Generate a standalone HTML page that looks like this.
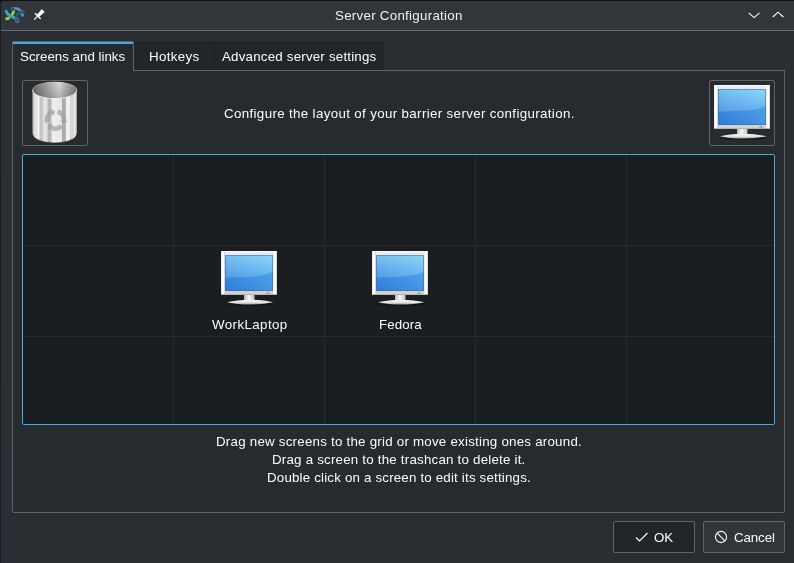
<!DOCTYPE html>
<html><head><meta charset="utf-8">
<style>
*{box-sizing:border-box;margin:0;padding:0}
html,body{-webkit-font-smoothing:antialiased;width:794px;height:563px;overflow:hidden;background:#2a2e32;font-family:"Liberation Sans",sans-serif;font-size:13.333px;color:#fcfcfc}
.a{position:absolute}
.t{position:absolute;white-space:pre;line-height:16px;will-change:transform}
#edgeL{left:0;top:0;width:1px;height:563px;background:linear-gradient(#1e1e1e,#17171f 40%,#1a1a2a)}
#edgeT{left:0;top:0;width:794px;height:1px;background:#121211}
#title{left:1px;top:1px;width:793px;height:29px;background:#31363b}
#sep{left:1px;top:30px;width:793px;height:1px;background:#6a6d70}
#panel{left:12px;top:70px;width:773px;height:443px;border:1px solid #5f6366;border-top:none;border-radius:0 0 2px 2px;background:#272a2e}
#panelTopR{left:133px;top:70px;width:652px;height:1px;background:#5f6366}
.tab{position:absolute;top:41px;height:30px}
#tab1{left:12px;width:122px;border:1px solid #5f6366;border-bottom:none;border-radius:2px 2px 0 0;background:#272a2e}
#tab1blue{left:13px;top:42px;width:120px;height:2px;background:#3daee9}
#tab2{left:134px;top:41px;width:80px;height:29px;background:#232629}
#tab3{left:215px;top:41px;width:169px;height:29px;background:#232629}
.frame{position:absolute;border:1px solid #5f6366;border-radius:2px}
#grid{left:22px;top:154px;width:753px;height:271px;border:1px solid #3daee9;border-radius:2px;background:#1b1e20;overflow:hidden}
.gv{position:absolute;top:0;width:1px;height:269px;background:#272a2d}
.gh{position:absolute;left:0;height:1px;width:751px;background:#272a2d}
.btn{position:absolute;top:521px;width:82px;height:32px;border:1px solid #606467;border-radius:2px}
</style></head><body>
<svg width="0" height="0" style="position:absolute">
<defs>
<linearGradient id="bz" x1="0" y1="0" x2="0" y2="1"><stop offset="0" stop-color="#ececec"/><stop offset="0.5" stop-color="#dedede"/><stop offset="1" stop-color="#d0d0d0"/></linearGradient>
<linearGradient id="bzs" x1="0" y1="0" x2="1" y2="0"><stop offset="0" stop-color="#d8d8d8"/><stop offset="0.25" stop-color="#ffffff"/><stop offset="0.6" stop-color="#ffffff"/><stop offset="1" stop-color="#c8c8c8"/></linearGradient>
<linearGradient id="scrTop" x1="0.2" y1="1" x2="0.8" y2="0"><stop offset="0" stop-color="#589fe6"/><stop offset="1" stop-color="#88d3f8"/></linearGradient>
<linearGradient id="scrBot" x1="0" y1="1" x2="1" y2="0"><stop offset="0" stop-color="#2f7bdc"/><stop offset="1" stop-color="#5aafec"/></linearGradient>
<linearGradient id="neck" x1="0" y1="0" x2="1" y2="0"><stop offset="0" stop-color="#b9b9b9"/><stop offset="0.45" stop-color="#f6f6f6"/><stop offset="1" stop-color="#bdbdbd"/></linearGradient>
<linearGradient id="base" x1="0" y1="0" x2="0" y2="1"><stop offset="0" stop-color="#fafafa"/><stop offset="0.6" stop-color="#e2e2e2"/><stop offset="1" stop-color="#9a9a9a"/></linearGradient>
<symbol id="mon" viewBox="0 0 64 64">
 <ellipse cx="33" cy="57" rx="24" ry="2" fill="#000" opacity="0.35"/>
 <rect x="27" y="47" width="10.5" height="7.5" fill="url(#neck)"/>
 <path d="M10 55.2 Q20 52.7 33 52.7 Q46 52.7 56.3 55.2 Q46 57.5 33 57.5 Q20 57.5 10 55.2Z" fill="url(#base)"/>
 <rect x="4" y="4" width="56" height="44" fill="url(#bz)"/>
 <rect x="4" y="4" width="4" height="44" fill="url(#bzs)"/>
 <rect x="56" y="4" width="4" height="44" fill="url(#bzs)"/>
 <rect x="4" y="4" width="56" height="1" fill="#f8f8f8"/>
 <rect x="4" y="47" width="56" height="1" fill="#b4b4b4"/>
 <rect x="8" y="8" width="48" height="36" fill="url(#scrBot)"/>
 <path d="M8 8 H56 V24.3 Q50 28.5 32 29.8 Q20 30.5 8 30.4 Z" fill="url(#scrTop)"/>
 <rect x="8.5" y="8.5" width="47" height="35" fill="none" stroke="#3d6d96" stroke-opacity="0.55" stroke-width="1"/>
 <path d="M49.5 46.5 Q51 44.8 52.5 46.5" fill="none" stroke="#7a7a7a" stroke-width="1"/>
</symbol>
<linearGradient id="tb" x1="9.4" y1="0" x2="54" y2="0" gradientUnits="userSpaceOnUse">
 <stop offset="0" stop-color="#a8a8a8"/>
 <stop offset="0.045" stop-color="#dcdcdc"/>
 <stop offset="0.115" stop-color="#e8e8e8"/>
 <stop offset="0.14" stop-color="#fbfbfb"/>
 <stop offset="0.17" stop-color="#c6c6c6"/>
 <stop offset="0.235" stop-color="#c4c4c4"/>
 <stop offset="0.25" stop-color="#e2e2e2"/>
 <stop offset="0.33" stop-color="#e0e0e0"/>
 <stop offset="0.35" stop-color="#b6b6b6"/>
 <stop offset="0.42" stop-color="#b8b8b8"/>
 <stop offset="0.44" stop-color="#eeeeee"/>
 <stop offset="0.66" stop-color="#e8e8e8"/>
 <stop offset="0.675" stop-color="#ababab"/>
 <stop offset="0.74" stop-color="#adadad"/>
 <stop offset="0.755" stop-color="#f3f3f3"/>
 <stop offset="0.84" stop-color="#eeeeee"/>
 <stop offset="0.845" stop-color="#d6d6d6"/>
 <stop offset="0.92" stop-color="#d6d6d6"/>
 <stop offset="0.935" stop-color="#f3f3f3"/>
 <stop offset="0.975" stop-color="#d0d0d0"/>
 <stop offset="1" stop-color="#8c8c8c"/>
</linearGradient>
<linearGradient id="rim" x1="9.4" y1="0" x2="54" y2="0" gradientUnits="userSpaceOnUse">
 <stop offset="0" stop-color="#6a6a6a"/>
 <stop offset="0.6" stop-color="#d9d9d9"/>
 <stop offset="1" stop-color="#7c7c7c"/>
</linearGradient>
<linearGradient id="rimv" x1="0" y1="0" x2="0" y2="1">
 <stop offset="0" stop-color="#000" stop-opacity="0"/>
 <stop offset="1" stop-color="#000" stop-opacity="0.18"/>
</linearGradient>
</defs></svg>
<div class="a" id="title"></div>
<div class="a" id="sep"></div>
<div class="a" id="edgeL"></div>
<div class="a" id="edgeT"></div>
<div class="a" style="left:1px;top:1px;width:3px;height:3px;background:radial-gradient(circle at 100% 100%, transparent 2.2px, #1e1f21 3px)"></div>

<!-- title bar icons -->
<svg class="a" style="left:2px;top:4px" width="24" height="22" viewBox="0 0 24 22">
 <path d="M11.6 7.6 Q11.2 10 9.4 11.6" fill="none" stroke="#a3cd33" stroke-width="2.9" stroke-linecap="round"/>
 <path d="M4.2 7.2 Q5.6 11.6 12.3 13.6" fill="none" stroke="#3ea3cc" stroke-width="2.9" stroke-linecap="round"/>
 <circle cx="4.9" cy="4.8" r="1.7" fill="#0e5248"/>
 <ellipse cx="5.6" cy="14.6" rx="2.5" ry="1.6" transform="rotate(-15 5.6 14.6)" fill="#a3cd33"/>
 <circle cx="11.1" cy="5.1" r="1.6" fill="none" stroke="#2a8ea0" stroke-width="0.9"/>
 <path d="M13.2 4.3 Q16.5 4.6 18.6 6.7" fill="none" stroke="#6a85d6" stroke-width="2.5" stroke-linecap="round"/>
 <path d="M14.2 13.2 Q15 8.5 21.8 7.4" fill="none" stroke="#13695a" stroke-width="2.9" stroke-linecap="round"/>
 <circle cx="20.3" cy="11" r="1.7" fill="#6a85d6"/>
 <circle cx="15.2" cy="16.4" r="2.2" fill="none" stroke="#5f7fd0" stroke-width="0.9"/>
 <circle cx="15.2" cy="16.6" r="0.8" fill="none" stroke="#5f7fd0" stroke-width="0.6"/>
</svg>
<svg class="a" style="left:28px;top:4px" width="24" height="22" viewBox="0 0 24 22">
 <path d="M13.9 5.1 L16.7 7.9 L10.9 13.1 L8.7 10.9 Z" fill="#fcfcfc"/>
 <path d="M7.3 9.5 L12.3 14.5" stroke="#fcfcfc" stroke-width="1.3" stroke-linecap="round"/>
 <path d="M9.8 12 L6.4 15.4" stroke="#fcfcfc" stroke-width="1.1" stroke-linecap="round"/>
</svg>
<div class="t" style="left:335px;top:8px;color:#efefef;letter-spacing:0.27px">Server Configuration</div>
<svg class="a" style="left:746px;top:10px" width="16" height="10" viewBox="0 0 16 10"><path d="M2.7 2.8 L8.1 7.6 L13.5 2.8" fill="none" stroke="#fcfcfc" stroke-width="1.1"/></svg>
<svg class="a" style="left:770px;top:10px" width="16" height="10" viewBox="0 0 16 10"><path d="M2.8 7 L8 2.2 L13.4 7" fill="none" stroke="#fcfcfc" stroke-width="1.1"/></svg>

<!-- tabs -->
<div class="a" id="panel"></div>
<div class="a" id="panelTopR"></div>
<div class="tab" id="tab1"></div>
<div class="a" id="tab1blue"></div>
<div class="a" id="tab2"></div>
<div class="a" id="tab3"></div>
<div class="a" style="left:214px;top:41px;width:1px;height:29px;background:#1e2124"></div>
<div class="t" style="left:20px;top:49px">Screens and links</div>
<div class="t" style="left:149px;top:49px;letter-spacing:0.35px">Hotkeys</div>
<div class="t" style="left:222px;top:49px;letter-spacing:0.2px">Advanced server settings</div>

<!-- top row -->
<div class="frame" style="left:22px;top:80px;width:66px;height:66px"></div>
<div class="t" style="left:224px;top:106px;letter-spacing:0.35px">Configure the layout of your barrier server configuration.</div>
<div class="frame" style="left:709px;top:80px;width:66px;height:66px"></div>
<svg class="a" style="left:710px;top:81px" width="64" height="64"><use href="#mon"/></svg>
<svg class="a" style="left:23px;top:81px" width="64" height="64" viewBox="0 0 64 64">
 <path d="M9.4 9 V52.5 A22.3 9.5 0 0 0 54 52.5 V9 Z" fill="url(#tb)"/>
 <path d="M9.4 52.5 A22.3 9.5 0 0 0 54 52.5" fill="none" stroke="#2a2a2a" stroke-opacity="0.7" stroke-width="1"/>
 <ellipse cx="31.7" cy="9.3" rx="22.3" ry="8.5" fill="#eeeeee"/>
 <ellipse cx="31.7" cy="9.0" rx="21.7" ry="8.0" fill="url(#rim)"/>
 <ellipse cx="31.7" cy="9.0" rx="21.7" ry="8.0" fill="url(#rimv)"/>
 <g fill="#9ea2a4" opacity="0.72" transform="translate(32.5 39)">
  <path d="M2.66 -10.67 A11 11 0 0 1 10.94 1.15 L12.73 1.34 L7.59 4.04 L4.38 0.46 L6.17 0.65 A6.2 6.2 0 0 0 1.50 -6.02 Z"/>
  <path d="M7.91 7.64 A11 11 0 0 1 -6.47 8.90 L-7.52 10.36 L-7.29 4.56 L-2.59 3.56 L-3.64 5.02 A6.2 6.2 0 0 0 4.46 4.31 Z"/>
  <path d="M-10.57 3.03 A11 11 0 0 1 -4.47 -10.05 L-5.21 -11.69 L-0.30 -8.59 L-1.79 -4.02 L-2.52 -5.66 A6.2 6.2 0 0 0 -5.96 1.71 Z"/>
 </g>
</svg>

<!-- grid -->
<div class="a" id="grid">
  <div class="gv" style="left:150px"></div>
  <div class="gv" style="left:301px"></div>
  <div class="gv" style="left:452px"></div>
  <div class="gv" style="left:603px"></div>
  <div class="gh" style="top:90px"></div>
  <div class="gh" style="top:181px"></div>
</div>
<svg class="a" style="left:217px;top:247px" width="64" height="64"><use href="#mon"/></svg>
<svg class="a" style="left:368px;top:247px" width="64" height="64"><use href="#mon"/></svg>
<div class="t" style="left:211.5px;top:317px;letter-spacing:0.4px">WorkLaptop</div>
<div class="t" style="left:378.6px;top:317px;letter-spacing:0.1px">Fedora</div>

<!-- help text -->
<div class="t" style="left:216px;top:434px;letter-spacing:0.23px">Drag new screens to the grid or move existing ones around.</div>
<div class="t" style="left:272px;top:452px;letter-spacing:0.21px">Drag a screen to the trashcan to delete it.</div>
<div class="t" style="left:267px;top:470px;letter-spacing:0.18px">Double click on a screen to edit its settings.</div>

<!-- buttons -->
<div class="btn" style="left:613px;background:#232629"></div>
<div class="btn" style="left:703px;background:#31363b"></div>
<svg class="a" style="left:634px;top:530px" width="16" height="14" viewBox="0 0 16 14"><path d="M2 7.5 L5.5 11 L13.5 3" fill="none" stroke="#fcfcfc" stroke-width="1.1"/></svg>
<div class="t" style="left:654px;top:530px">OK</div>
<svg class="a" style="left:713px;top:529px" width="16" height="16" viewBox="0 0 16 16"><circle cx="8" cy="8" r="5.6" fill="none" stroke="#fcfcfc" stroke-width="1.1"/><path d="M4.2 4.2 L11.8 11.8" stroke="#fcfcfc" stroke-width="1.1"/></svg>
<div class="t" style="left:734px;top:530px;letter-spacing:-0.12px">Cancel</div>
</body></html>
